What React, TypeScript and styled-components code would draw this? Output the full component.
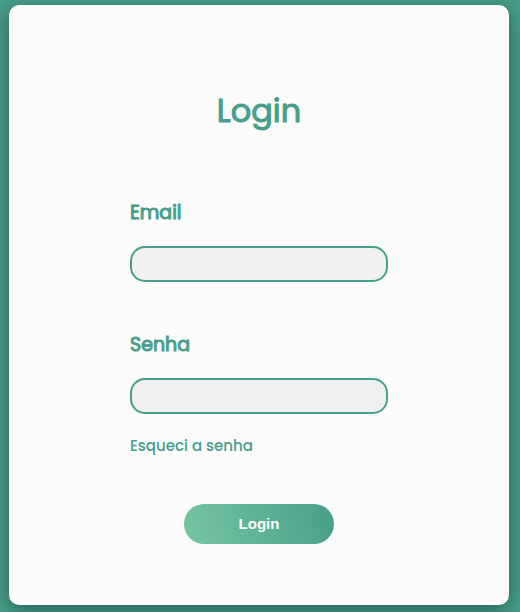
import React from "react";
import styled, { createGlobalStyle } from "styled-components";

const green = "#479e8a";
const font = `Poppins, Inter, "Open Sans", sans-serif`;

const GlobalStyle = createGlobalStyle`
  *, *::before, *::after { box-sizing: border-box; }
  body { margin: 0; background: ${green}; }
`;

const Page = styled.main`
  display: flex;
  justify-content: center;
  align-items: flex-start;
  min-height: 100vh;
  padding: 5px 11px 7px 9px;
  background: ${green};
  overflow: hidden;
`;

const Card = styled.form`
  display: flex;
  flex-direction: column;
  align-items: center;
  width: 100%;
  max-width: 500px;
  padding: 81px 24px 61px;
  border-radius: 10px;
  background: #fbfbfb;
  box-shadow: 0 5px 20px rgba(0, 0, 0, 0.4);
`;

const Title = styled.h1`
  margin: 0;
  font: 400 32px/50px ${font};
  color: ${green};
  -webkit-text-stroke: 1px ${green};
`;

const Fields = styled.div`
  display: flex;
  flex-direction: column;
  gap: 48px;
  width: 100%;
  max-width: 258px;
  margin-top: 62px;
`;

const Field = styled.div`
  display: flex;
  flex-direction: column;
`;

const Label = styled.label`
  margin-bottom: 18px;
  font: 400 19px/30px ${font};
  color: ${green};
  -webkit-text-stroke: 1px ${green};
`;

const Input = styled.input`
  width: 100%;
  height: 36px;
  padding: 0 12px;
  border: 2px solid ${green};
  border-radius: 15px;
  background: #f0f0f0;
  font: 400 16px/24px ${font};
  color: ${green};
`;

const ForgotLink = styled.a`
  align-self: flex-start;
  margin-top: 20px;
  font: 500 15px/24px ${font};
  color: ${green};
  text-decoration: none;
`;

const Submit = styled.button`
  width: 150px;
  height: 40px;
  margin-top: 46px;
  border: 0;
  border-radius: 20px;
  background: linear-gradient(70deg, #75c6a2, #479e8a);
  color: #fff;
  font: 700 15px/20px "Liberation Sans", Arial, sans-serif;
  cursor: pointer;
`;

export default function App() {
  return (
    <>
      <GlobalStyle />
      <Page>
        <Card onSubmit={(event) => event.preventDefault()}>
          <Title>Login</Title>
          <Fields>
            <Field>
              <Label htmlFor="email">Email</Label>
              <Input id="email" name="email" type="email" />
            </Field>
            <Field>
              <Label htmlFor="password">Senha</Label>
              <Input id="password" name="password" type="password" />
              <ForgotLink href="#recuperar">Esqueci a senha</ForgotLink>
            </Field>
          </Fields>
          <Submit type="submit">Login</Submit>
        </Card>
      </Page>
    </>
  );
}
